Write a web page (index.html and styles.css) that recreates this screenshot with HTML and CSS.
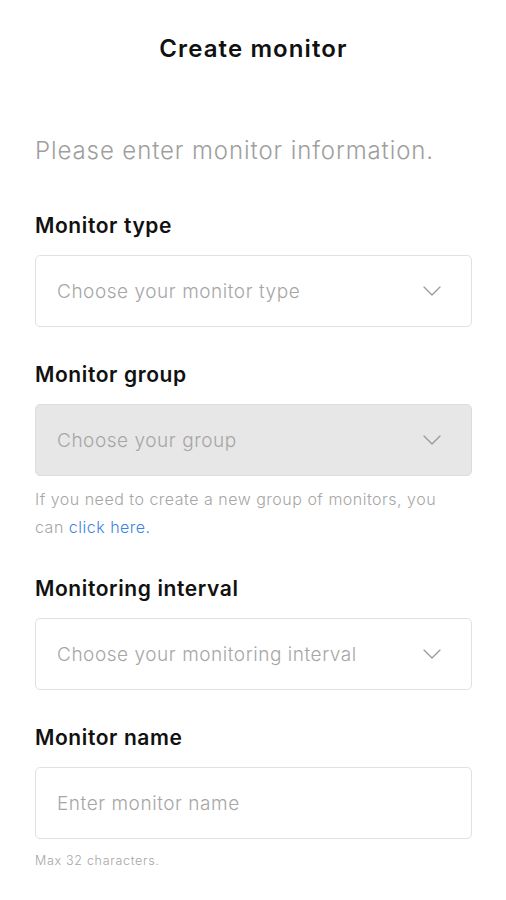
FILE: index.html
```html
<!DOCTYPE html>
<html lang="en">
<head>
<meta charset="utf-8">
<title>Create monitor</title>
<link rel="stylesheet" href="styles.css">
</head>
<body>
<main class="page">
  <h1 class="title">Create monitor</h1>
  <p class="intro">Please enter monitor information.</p>
  <form class="form">
    <div class="field">
      <div class="label">Monitor type</div>
      <div class="box">
        <span class="placeholder">Choose your monitor type</span>
        <svg class="chevron" width="18" height="10" viewBox="0 0 18 10"><path d="M1 1 L9 9 L17 1" fill="none" stroke="#9a9a9a" stroke-width="1.3" stroke-linecap="round" stroke-linejoin="round"/></svg>
      </div>
    </div>
    <div class="field">
      <div class="label">Monitor group</div>
      <div class="box box-disabled">
        <span class="placeholder">Choose your group</span>
        <svg class="chevron" width="18" height="10" viewBox="0 0 18 10"><path d="M1 1 L9 9 L17 1" fill="none" stroke="#9a9a9a" stroke-width="1.3" stroke-linecap="round" stroke-linejoin="round"/></svg>
      </div>
      <p class="hint">If you need to create a new group of monitors, you can <a class="link" href="#">click here.</a></p>
    </div>
    <div class="field">
      <div class="label">Monitoring interval</div>
      <div class="box">
        <span class="placeholder">Choose your monitoring interval</span>
        <svg class="chevron" width="18" height="10" viewBox="0 0 18 10"><path d="M1 1 L9 9 L17 1" fill="none" stroke="#9a9a9a" stroke-width="1.3" stroke-linecap="round" stroke-linejoin="round"/></svg>
      </div>
    </div>
    <div class="field">
      <div class="label">Monitor name</div>
      <div class="box">
        <span class="placeholder">Enter monitor name</span>
      </div>
      <p class="small">Max 32 characters.</p>
    </div>
  </form>
</main>
</body>
</html>
```

FILE: styles.css
```css
* { box-sizing: border-box; }
body {
  margin: 0;
  background: #ffffff;
  font-family: Inter, "Noto Sans", sans-serif;
  color: #111111;
}
.page {
  padding: 34px 34px 0 35px;
}
.title {
  margin: 0;
  text-align: center;
  font-size: 24px;
  font-weight: 600;
  line-height: 30px;
  letter-spacing: 1.1px;
  color: #111111;
}
.intro {
  margin: 69px 0 42px;
  font-size: 24px;
  font-weight: 300;
  line-height: 36px;
  letter-spacing: 0.9px;
  color: #9e9e9e;
}
.form {
  display: flex;
  flex-direction: column;
  gap: 33px;
}
.label {
  font-size: 21px;
  font-weight: 600;
  line-height: 30px;
  letter-spacing: 0.6px;
  margin-bottom: 14px;
  color: #111111;
}
.box {
  height: 72px;
  border: 1px solid #e1e1e1;
  border-radius: 5px;
  display: flex;
  align-items: center;
  justify-content: space-between;
  padding: 0 30px 0 21px;
  background: #ffffff;
}
.box-disabled {
  background: #e7e7e7;
  border-color: #dcdcdc;
}
.placeholder {
  font-size: 19px;
  font-weight: 300;
  letter-spacing: 0.55px;
  color: #a6a6a6;
}
.chevron { display: block; }
.hint {
  margin: 9px 0 0;
  max-width: 415px;
  font-size: 16px;
  font-weight: 300;
  line-height: 28px;
  letter-spacing: 0.5px;
  color: #a6a6a6;
}
.link {
  color: #3b82e6;
  text-decoration: none;
}
.small {
  margin: 12px 0 0;
  font-size: 12.5px;
  font-weight: 300;
  line-height: 20px;
  letter-spacing: 0.7px;
  color: #a6a6a6;
}
```
